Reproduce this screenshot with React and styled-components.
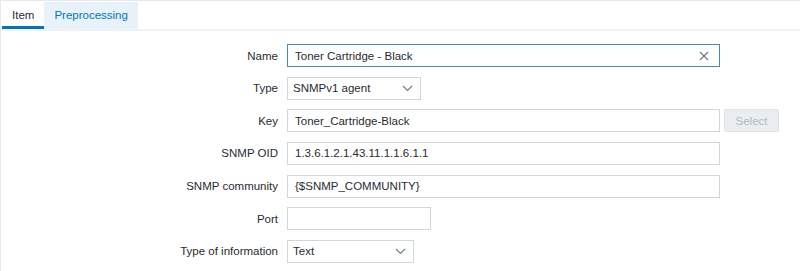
import React from "react";
import styled, { createGlobalStyle } from "styled-components";

const Global = createGlobalStyle`
  html, body { margin: 0; padding: 0; background: #ffffff; }
  body { font-family: "Liberation Sans", Arial, sans-serif; font-size: 11.5px; color: #1f2c33; }
`;

const Panel = styled.div`
  width: 800px;
  height: 271px;
  box-sizing: border-box;
  border-top: 1px solid #e6eaed;
  border-left: 1px solid #e6eaed;
  background: #fff;
  overflow: hidden;
`;

const TabBar = styled.div`
  display: flex;
  padding: 1px 0 0 1px;
  border-bottom: 2px solid #f1f3f5;
`;

const Tab = styled.div`
  height: 27px;
  box-sizing: border-box;
  padding: 0 10px;
  display: flex;
  align-items: center;
  font-size: 11.5px;
  color: ${(p) => (p.$active ? "#1f2c33" : "#0275b8")};
  background: ${(p) => (p.$active ? "transparent" : "#e7f2fb")};
  border-bottom: 3px solid ${(p) => (p.$active ? "#0275b8" : "transparent")};
  padding-top: 2px;
`;

const Form = styled.div`
  display: flex;
  flex-direction: column;
  gap: 9.67px;
  padding-top: 13px;
`;

const Row = styled.div`
  display: flex;
  align-items: center;
  height: 23px;
`;

const Label = styled.div`
  width: 277px;
  text-align: right;
  margin-right: 9px;
  color: #1f2c33;
  font-size: 11.5px;
`;

const InputBox = styled.div`
  position: relative;
  width: ${(p) => p.$w}px;
  height: 23px;
  box-sizing: border-box;
  border: 1px solid ${(p) => (p.$focus ? "#3f8cc2" : "#cfd7db")};
  background: #fff;
  display: flex;
  align-items: center;
  padding: 0 7px;
  font-size: 11.5px;
  color: #1f2c33;
  white-space: nowrap;
`;

const SelectBox = styled(InputBox)`
  justify-content: space-between;
  padding: 0 7px 0 5px;
`;

const ClearIcon = styled.svg`
  position: absolute;
  right: 10px;
  top: 6px;
`;

const SideButton = styled.div`
  margin-left: 4px;
  width: 55px;
  height: 23px;
  box-sizing: border-box;
  border: 1px solid #dfe4e7;
  background: #ebeef0;
  color: #acbbc2;
  font-size: 11.5px;
  display: flex;
  align-items: center;
  justify-content: center;
  border-radius: 2px;
`;

const Chevron = () => (
  <svg width="11" height="7" viewBox="0 0 11 7">
    <path d="M1 1 L5.5 5.5 L10 1" fill="none" stroke="#6f7f88" strokeWidth="1.2" />
  </svg>
);

export default function App() {
  return (
    <>
      <Global />
      <Panel>
        <TabBar>
          <Tab $active>Item</Tab>
          <Tab>Preprocessing</Tab>
        </TabBar>
        <Form>
          <Row>
            <Label>Name</Label>
            <InputBox $w={433} $focus>
              Toner Cartridge - Black
              <ClearIcon width="10" height="10" viewBox="0 0 10 10">
                <path d="M1 1 L9 9 M9 1 L1 9" stroke="#6f7f88" strokeWidth="1.3" fill="none" />
              </ClearIcon>
            </InputBox>
          </Row>
          <Row>
            <Label>Type</Label>
            <SelectBox $w={134}>
              SNMPv1 agent
              <Chevron />
            </SelectBox>
          </Row>
          <Row>
            <Label>Key</Label>
            <InputBox $w={433}>Toner_Cartridge-Black</InputBox>
            <SideButton>Select</SideButton>
          </Row>
          <Row>
            <Label>SNMP OID</Label>
            <InputBox $w={433}>1.3.6.1.2.1.43.11.1.1.6.1.1</InputBox>
          </Row>
          <Row>
            <Label>SNMP community</Label>
            <InputBox $w={433}>{"{$SNMP_COMMUNITY}"}</InputBox>
          </Row>
          <Row>
            <Label>Port</Label>
            <InputBox $w={144}></InputBox>
          </Row>
          <Row>
            <Label>Type of information</Label>
            <SelectBox $w={127}>
              Text
              <Chevron />
            </SelectBox>
          </Row>
        </Form>
      </Panel>
    </>
  );
}
